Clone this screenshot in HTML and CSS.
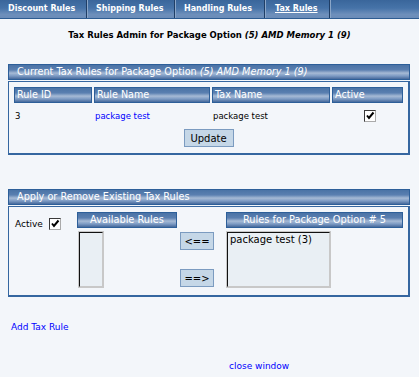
FILE: index.html
```html
<!DOCTYPE html>
<html>
<head>
<meta charset="utf-8">
<link rel="stylesheet" href="styles.css">
</head>
<body>
<div class="tabs">
  <div class="tab t1"><span>Discount Rules</span></div>
  <div class="tab t2"><span>Shipping Rules</span></div>
  <div class="tab t3"><span>Handling Rules</span></div>
  <div class="tab t4"><span class="current">Tax Rules</span></div>
</div>

<h1 class="title">Tax Rules Admin for Package Option <i>(5) AMD Memory 1 (9)</i></h1>

<div class="section s1">
  <div class="bar">Current Tax Rules for Package Option <i>(5) AMD Memory 1 (9)</i></div>
  <div class="box">
    <div class="grid">
      <div class="th">Rule ID</div>
      <div class="th">Rule Name</div>
      <div class="th">Tax Name</div>
      <div class="th">Active</div>
      <div class="td">3</div>
      <div class="td"><a href="#">package test</a></div>
      <div class="td">package test</div>
      <div class="td center"><span class="check"><svg viewBox="0 0 12 12" width="12" height="12"><path d="M3 5.5 L5 8 L9.5 2.5" fill="none" stroke="#000" stroke-width="2"/></svg></span></div>
    </div>
    <div class="actions"><button class="btn update">Update</button></div>
  </div>
</div>

<div class="section s2">
  <div class="bar">Apply or Remove Existing Tax Rules</div>
  <div class="box apply">
    <div class="active-col">Active <span class="check"><svg viewBox="0 0 12 12" width="12" height="12"><path d="M3 5.5 L5 8 L9.5 2.5" fill="none" stroke="#000" stroke-width="2"/></svg></span></div>
    <div class="list-col avail">
      <div class="lhead">Available Rules</div>
      <div class="listbox small"></div>
    </div>
    <div class="move-col">
      <button class="btn move">&lt;==</button>
      <button class="btn move">==&gt;</button>
    </div>
    <div class="list-col assigned">
      <div class="lhead">Rules for Package Option # 5</div>
      <div class="listbox wide">package test (3)</div>
    </div>
  </div>
</div>

<div class="add"><a href="#">Add Tax Rule</a></div>
<div class="close"><a href="#">close window</a></div>
</body>
</html>
```

FILE: styles.css
```css
html, body {
  margin: 0;
  padding: 0;
  background: #f3f6fa;
}
body {
  font-family: "DejaVu Sans", Verdana, sans-serif;
  font-size: 8.5px;
  color: #000;
  height: 377px;
  overflow: hidden;
}
a { color: #0000ff; text-decoration: none; }

.tabs {
  display: flex;
  background: linear-gradient(#3a669b, #4673a8 45%, #6d8fbb 80%, #6b8cb8);
  border-bottom: 1px solid #2d5c92;
  box-sizing: border-box;
  height: 19px;
}
.tab {
  box-sizing: border-box;
  height: 18px;
  display: flex;
  align-items: center;
  color: #fff;
  font-weight: bold;
  font-size: 8px;
  border-right: 1px solid #8aa6c8;
  box-shadow: inset -1px 0 0 #1f3e66;
  padding-bottom: 2px;
}
.t1 { width: 88px; padding-left: 8px; }
.t2 { width: 88px; padding-left: 8px; }
.t3 { width: 90px; padding-left: 8px; }
.t4 { width: 65px; padding-left: 9px; }
.current { text-decoration: underline; }

.title {
  margin: 10px 0 0 0;
  font-size: 8.5px;
  font-weight: bold;
  text-align: center;
  line-height: 12px;
}

.section { margin: 0 9px 0 8px; }
.s1 { margin-top: 23px; }
.s2 { margin-top: 34px; }

.bar {
  height: 16px;
  box-sizing: border-box;
  border: 1px solid #2d5f99;
  background: linear-gradient(#4a73a6, #5a7fb0 35%, #a6bad5 58%, #7d9bc4 78%, #46699b);
  color: #fff;
  padding-left: 8px;
  line-height: 14px;
  font-size: 9.7px;
}

.box {
  margin-top: 1px;
  border: 2px solid #3566a0;
  border-width: 1px 2px 2px 1px;
  box-sizing: border-box;
}
.s1 .box { height: 74px; padding: 5px 0 0 5px; }

.grid {
  display: grid;
  grid-template-columns: 78px 116px 118px 71px;
  column-gap: 2px;
}
.th {
  height: 16px;
  box-sizing: border-box;
  border: 1px solid #2d5f99;
  background: linear-gradient(#4a73a6, #5a7fb0 35%, #a6bad5 58%, #7d9bc4 78%, #46699b);
  color: #fff;
  padding-left: 2px;
  line-height: 14px;
  font-size: 9.6px;
}
.td {
  height: 26px;
  line-height: 26px;
  padding-left: 1px;
}
.td.center {
  display: flex;
  align-items: center;
  justify-content: center;
  padding-left: 4px;
}

.check {
  display: inline-block;
  width: 12px;
  height: 12px;
  box-sizing: border-box;
  border: 1px solid #3a3a3a;
  border-right-color: #aaa;
  border-bottom-color: #aaa;
  background: #fff;
  vertical-align: middle;
  position: relative;
}
.check svg { position: absolute; left: -1px; top: -1px; }

.actions { text-align: center; margin-top: 0; padding-right: 5px; }
.btn {
  font-family: "DejaVu Sans", Verdana, sans-serif;
  font-size: 10px;
  color: #000;
  background: #c5d7e7;
  border: 1px solid #7b9bc0;
  padding: 0;
  box-sizing: border-box;
}
.update { width: 50px; height: 18px; }

.apply {
  height: 91px;
  display: flex;
  align-items: flex-start;
  padding: 5px 0 0 6px;
}
.active-col {
  margin-top: 6px;
  display: flex;
  align-items: center;
  gap: 6px;
  width: 62px;
  font-size: 9px;
}
.lhead {
  height: 16px;
  box-sizing: border-box;
  border: 1px solid #2d5f99;
  background: linear-gradient(#4a73a6, #5a7fb0 35%, #a6bad5 58%, #7d9bc4 78%, #46699b);
  color: #fff;
  text-align: center;
  line-height: 14px;
  font-size: 9.8px;
}
.avail { width: 100px; }
.assigned { width: 177px; }
.listbox {
  margin-top: 3px;
  height: 57px;
  box-sizing: border-box;
  background: #e9eff4;
  border: 2px solid;
  border-color: #111 #c8c8c8 #c8c8c8 #111;
  outline: 1px solid #c8c8c8;
  outline-offset: -1px;
  font-size: 10px;
  padding: 1px 0 0 2px;
  line-height: 12px;
}
.listbox.small { width: 26px; margin-left: 1px; }
.listbox.wide { width: 105px; }
.move-col {
  width: 46px;
  padding-left: 3px;
  display: flex;
  flex-direction: column;
  gap: 19px;
  margin-top: 20px;
}
.move { width: 34px; height: 18px; font-size: 10px; }

.add { margin: 24px 0 0 11px; font-size: 9px; line-height: 12px; }
.close { margin: 27px 0 0 229px; font-size: 9px; line-height: 12px; }
```
